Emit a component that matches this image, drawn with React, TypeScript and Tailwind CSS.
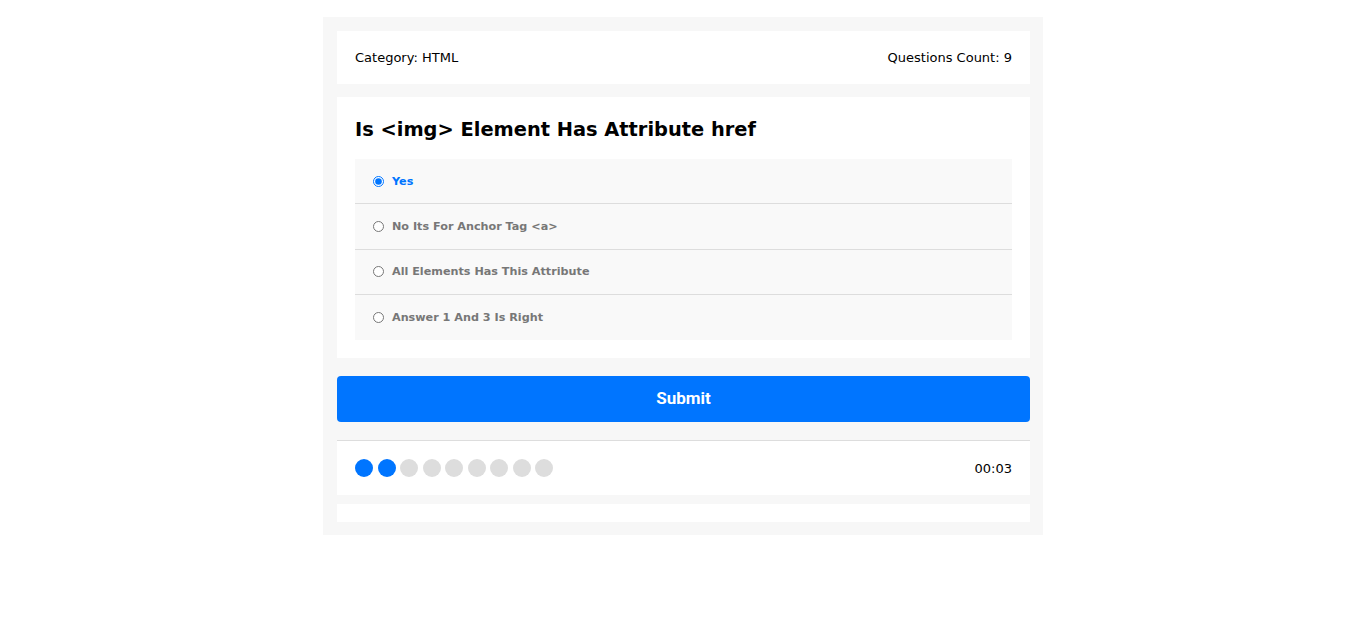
import React, { useState } from 'react';

const answers = [
  'Yes',
  'No Its For Anchor Tag <a>',
  'All Elements Has This Attribute',
  'Answer 1 And 3 Is Right',
];

const TOTAL = 9;
const ANSWERED = 2;

export default function App() {
  const [picked, setPicked] = useState(0);

  return (
    <div className="min-h-screen bg-white pt-[17px] font-['DejaVu_Sans',Tahoma,sans-serif]">
      <div className="mx-auto w-[720px] bg-[#f7f7f7] p-[14px] pr-[13px] pb-[13px]">
        {/* Info */}
        <div className="flex h-[53px] items-center justify-between bg-white px-[18px] text-[13px] text-black">
          <div className="pt-[1px]">Category: HTML</div>
          <div className="pt-[1px]">Questions Count: 9</div>
        </div>

        {/* Quiz area */}
        <div className="mt-[13px] bg-white p-[18px] pt-[20px]">
          <h2 className="text-[19.4px] font-bold leading-[26px] text-black">
            Is &lt;img&gt; Element Has Attribute href
          </h2>
          <div className="mt-[16px] bg-[#f9f9f9]">
            {answers.map((a, i) => (
              <label
                key={a}
                className={`flex h-[45.25px] cursor-pointer items-center px-[18px] ${
                  i < answers.length - 1 ? 'border-b border-[#ddd]' : ''
                }`}
              >
                <input
                  type="radio"
                  name="question"
                  checked={picked === i}
                  onChange={() => setPicked(i)}
                  className="m-0 h-[11px] w-[11px] accent-[#0075ff]"
                />
                <span
                  className={`ml-[8px] pt-[2px] text-[11.2px] font-bold ${
                    picked === i ? 'text-[#0075ff]' : 'text-[#777]'
                  }`}
                >
                  {a}
                </span>
              </label>
            ))}
          </div>
        </div>

        <button className="mt-[18px] flex h-[46px] w-full items-center justify-center rounded-[4px] bg-[#0075ff] font-['Roboto',sans-serif] text-[17px] font-bold text-white">
          Submit
        </button>

        {/* Bullets */}
        <div className="mt-[18px] flex h-[55px] items-center justify-between border-t border-[#ddd] bg-white px-[18px]">
          <div className="flex gap-[4.5px]">
            {Array.from({ length: TOTAL }).map((_, i) => (
              <span
                key={i}
                className={`h-[18px] w-[18px] rounded-full ${i < ANSWERED ? 'bg-[#0075ff]' : 'bg-[#ddd]'}`}
              />
            ))}
          </div>
          <div className="pt-[1px] text-[13px] text-black">00:03</div>
        </div>

        {/* Results */}
        <div className="mt-[9px] h-[18px] bg-white" />
      </div>
    </div>
  );
}
